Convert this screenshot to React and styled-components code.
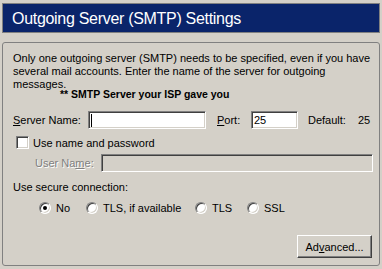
import { createGlobalStyle, styled } from "styled-components";

const GlobalStyle = createGlobalStyle`
  html, body {
    margin: 0;
    padding: 0;
    background: #d4d0c8;
  }
  body {
    font-family: "Liberation Sans", Arial, sans-serif;
    font-size: 11px;
    color: #000;
  }
`;

const App = () => {
  return (
    <Page>
      <GlobalStyle />
      <Header>
        <Title>Outgoing Server (SMTP) Settings</Title>
      </Header>
      <Group>
        <Intro>
          Only one outgoing server (SMTP) needs to be specified, even if you have
          <br />
          several mail accounts. Enter the name of the server for outgoing
          <br />
          messages.
        </Intro>
        <Hint>** SMTP Server your ISP gave you</Hint>

        <Row $top={11} $h={18}>
          <Label $w={75}>
            <u>S</u>erver Name:
          </Label>
          <Field $w={118}>
            <Caret />
          </Field>
          <Label $ml={11} $w={34}>
            <u>P</u>ort:
          </Label>
          <Field $w={47}>25</Field>
          <Label $ml={10} $w={50}>
            Default:
          </Label>
          <Label>25</Label>
        </Row>

        <Row $top={7} $h={13}>
          <Check />
          <Label $ml={4}>Use name and password</Label>
        </Row>

        <Row $top={5} $h={18}>
          <Label $ml={22} $w={66} $disabled>
            User Na<u>m</u>e:
          </Label>
          <Field $disabled $grow />
        </Row>

        <Caption>Use secure connection:</Caption>

        <Row $top={7} $h={13}>
          <Option $ml={26} $w={47}>
            <Radio $checked />
            No
          </Option>
          <Option $w={109}>
            <Radio />
            TLS, if available
          </Option>
          <Option $w={52}>
            <Radio />
            TLS
          </Option>
          <Option>
            <Radio />
            SSL
          </Option>
        </Row>

        <ButtonRow>
          <Button type="button">
            Ad<u>v</u>anced...
          </Button>
        </ButtonRow>
      </Group>
    </Page>
  );
};

const Page = styled.div`
  padding: 3px 2px 0 2px;
`;

const Header = styled.div`
  height: 28px;
  border: 1px solid #808080;
  background: #0a246a;
  padding: 0 9px;
`;

const Title = styled.div`
  padding-top: 2px;
  line-height: 26px;
  font-size: 16px;
  letter-spacing: -0.3px;
  color: #fff;
  white-space: nowrap;
`;

const Group = styled.div`
  margin-top: 9px;
  border: 1px solid #808080;
  border-radius: 3px;
  padding: 9px 6px 7px 10px;
`;

const Intro = styled.div`
  line-height: 13px;
  white-space: nowrap;
`;

const Hint = styled.div`
  margin: -2px 0 0 47px;
  font-size: 10.5px;
  font-weight: bold;
  line-height: 11px;
  white-space: nowrap;
`;

const Row = styled.div`
  display: flex;
  align-items: center;
  margin-top: ${(p) => p.$top}px;
  height: ${(p) => p.$h}px;
`;

const Label = styled.span`
  flex: none;
  margin-left: ${(p) => p.$ml || 0}px;
  width: ${(p) => (p.$w ? `${p.$w}px` : "auto")};
  white-space: nowrap;
  color: ${(p) => (p.$disabled ? "#808080" : "#000")};
  text-shadow: ${(p) => (p.$disabled ? "1px 1px 0 #fff" : "none")};

  u {
    text-decoration-thickness: 1px;
    text-underline-offset: 1px;
  }
`;

const sunken = `
  border: 1px solid;
  border-color: #808080 #ffffff #ffffff #808080;
  box-shadow: inset 1px 1px 0 #404040, inset -1px -1px 0 #d4d0c8;
`;

const Field = styled.div`
  ${sunken}
  box-sizing: border-box;
  display: flex;
  align-items: center;
  flex: ${(p) => (p.$grow ? "1" : "none")};
  width: ${(p) => (p.$w ? `${p.$w}px` : "auto")};
  height: 18px;
  padding: 0 2px;
  background: ${(p) => (p.$disabled ? "#d4d0c8" : "#fff")};
`;

const Caret = styled.span`
  width: 1px;
  height: 13px;
  background: #000;
`;

const Check = styled.span`
  ${sunken}
  box-sizing: border-box;
  flex: none;
  margin-left: 3px;
  width: 13px;
  height: 13px;
  background: #fff;
`;

const Caption = styled.div`
  margin-top: 9px;
  line-height: 13px;
`;

const Option = styled.span`
  flex: none;
  display: flex;
  align-items: center;
  gap: 5px;
  margin-left: ${(p) => p.$ml || 0}px;
  width: ${(p) => (p.$w ? `${p.$w}px` : "auto")};
  white-space: nowrap;
`;

const Radio = styled.span`
  position: relative;
  box-sizing: border-box;
  flex: none;
  width: 12px;
  height: 12px;
  border-radius: 50%;
  border: 1px solid;
  border-color: #808080 #ffffff #ffffff #808080;
  background: #fff;
  box-shadow: inset 1px 1px 0 #404040, inset -1px -1px 0 #d4d0c8;

  &::after {
    content: "";
    display: ${(p) => (p.$checked ? "block" : "none")};
    position: absolute;
    left: 3px;
    top: 3px;
    width: 4px;
    height: 4px;
    border-radius: 50%;
    background: #000;
  }
`;

const ButtonRow = styled.div`
  display: flex;
  justify-content: flex-end;
  margin-top: 21px;
  padding-right: 1px;
`;

const Button = styled.button`
  box-sizing: border-box;
  width: 75px;
  height: 23px;
  padding: 0;
  font-family: inherit;
  font-size: 11px;
  color: #000;
  background: #d4d0c8;
  border: 1px solid;
  border-color: #ffffff #404040 #404040 #ffffff;
  box-shadow: inset -1px -1px 0 #808080, inset 1px 1px 0 #d4d0c8;

  u {
    text-decoration-thickness: 1px;
    text-underline-offset: 1px;
  }
`;

export default App;
